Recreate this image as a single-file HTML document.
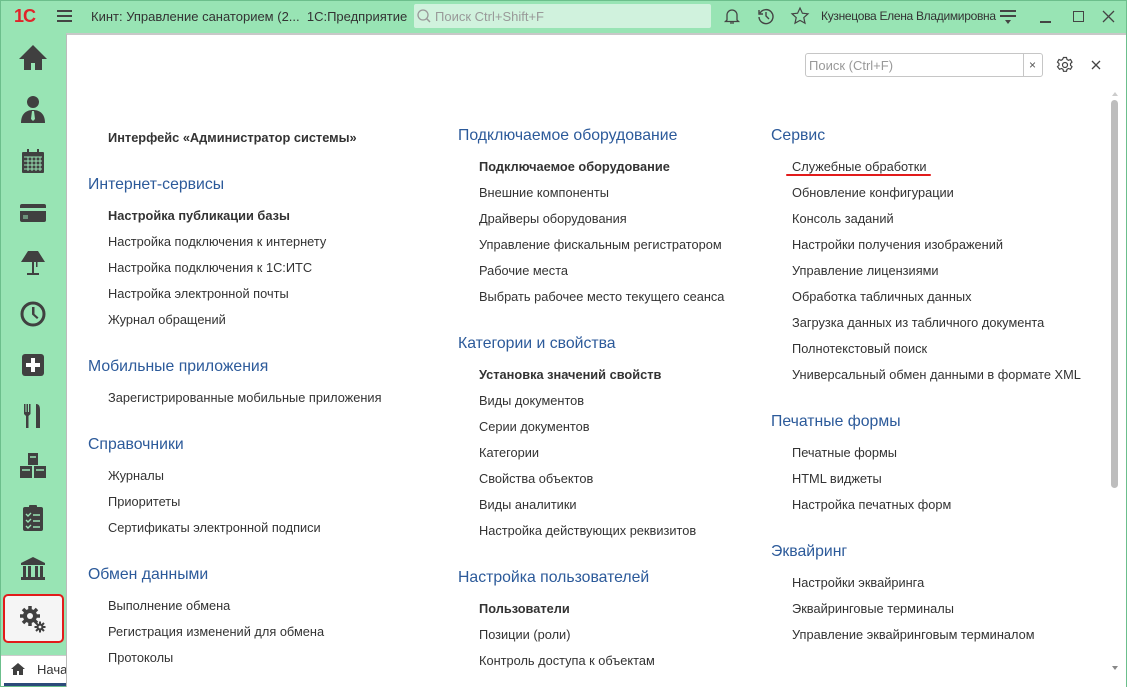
<!DOCTYPE html>
<html><head><meta charset="utf-8"><style>
*{margin:0;padding:0;box-sizing:border-box}
body{width:1127px;height:687px;overflow:hidden;background:#98e4b4;font-family:"Liberation Sans",sans-serif;position:relative;color:#333}
.a{position:absolute;white-space:nowrap}
.h{font-size:15.8px;color:#2c5a9a;line-height:20px;margin-top:1px}
.i{font-size:12.8px;line-height:16px;color:#333;margin-top:1px}
.b{font-weight:bold}
.ic{position:absolute;left:18px;width:30px;height:30px;fill:#404040}
</style></head><body>
<div class="a" style="left:0;top:0;width:1127px;height:687px;border:1px solid #6cbf8c"></div>
<div class="a" style="left:14px;top:6px;font:bold 18px 'Liberation Sans';color:#e0242a;letter-spacing:-1px">1С</div>
<div class="a" style="left:57px;top:10px;width:15px;height:2px;background:#444;box-shadow:0 5px 0 #444,0 10px 0 #444"></div>
<div class="a" style="left:91px;top:9px;font-size:13px;color:#333">Кинт: Управление санаторием (2...&nbsp;&nbsp;1С:Предприятие</div>
<div class="a" style="left:414px;top:4px;width:297px;height:24px;background:#d0f2dd;border-radius:2px"></div>
<svg class="a" style="left:416px;top:8px" width="16" height="16"><circle cx="7" cy="7" r="5" fill="none" stroke="#999" stroke-width="1.3"/><line x1="10.5" y1="10.5" x2="14" y2="14" stroke="#999" stroke-width="1.5"/></svg>
<div class="a" style="left:435px;top:9px;font-size:13px;color:#999">Поиск Ctrl+Shift+F</div>
<svg class="a" style="left:722px;top:6px" width="20" height="20" fill="none" stroke="#444" stroke-width="1.3"><path d="M5 14V9a5 5 0 0110 0v5l1.5 1.5h-13z M8 17h4"/></svg>
<svg class="a" style="left:756px;top:6px" width="20" height="20" fill="none" stroke="#444" stroke-width="1.4"><path d="M4 7a7 7 0 11-1 4M3 4v4h4M10 6v4l3 3"/></svg>
<svg class="a" style="left:790px;top:6px" width="20" height="20" fill="none" stroke="#444" stroke-width="1.2"><path d="M10 2l2.4 5.2 5.6.6-4.2 3.8 1.2 5.6L10 14.4 5 17.2l1.2-5.6L2 7.8l5.6-.6z"/></svg>
<div class="a" style="left:821px;top:9px;font-size:12px;color:#333;letter-spacing:-0.3px">Кузнецова Елена Владимировна</div>
<div class="a" style="left:1000px;top:10px;width:16px;height:1.5px;background:#444;box-shadow:0 5px 0 #444"></div>
<div class="a" style="left:1005px;top:20px;border:3px solid transparent;border-top:4px solid #444"></div>
<div class="a" style="left:1040px;top:21px;width:11px;height:1.5px;background:#444"></div>
<div class="a" style="left:1073px;top:11px;width:11px;height:11px;border:1.3px solid #444"></div>
<svg class="a" style="left:1102px;top:10px" width="13" height="13" stroke="#444" stroke-width="1.3"><path d="M1 1l11 11M12 1L1 12"/></svg>
<svg class="ic" style="top:43px" viewBox="0 0 30 30"><path d="M15 2L1 16h5v11h7v-7h4v7h7V16h5z"/></svg>
<svg class="ic" style="top:94px" viewBox="0 0 30 30"><circle cx="15" cy="8" r="6"/><path d="M3 29c0-9 5-13 12-13s12 4 12 13z"/><path d="M14 17h2l1 8-2 2-2-2z" fill="#98e4b4"/></svg>
<svg class="ic" style="top:146px" viewBox="0 0 30 30"><rect x="4" y="6" width="22" height="21" rx="1"/><rect x="9" y="3" width="2" height="5"/><rect x="19" y="3" width="2" height="5"/><path d="M6 11h18M6 15h18M6 19h18M6 23h18M10 11v14M14 11v14M18 11v14M22 11v14" stroke="#98e4b4" stroke-width="1"/></svg>
<svg class="ic" style="top:197px" viewBox="0 0 30 30"><rect x="2" y="7" width="26" height="18" rx="2"/><rect x="2" y="11" width="26" height="3" fill="#98e4b4"/><path d="M5 19h5M5 21h5" stroke="#98e4b4"/></svg>
<svg class="ic" style="top:248px" viewBox="0 0 30 30"><path d="M10 3h10l7 11H3z"/><rect x="14" y="14" width="2" height="12"/><rect x="9" y="25" width="12" height="2"/><rect x="18" y="14" width="1.5" height="5"/></svg>
<svg class="ic" style="top:299px" viewBox="0 0 30 30"><circle cx="15" cy="15" r="11" fill="none" stroke="#404040" stroke-width="3"/><path d="M14 8h2.5v7l4 3.5-1.5 1.5-5-4.5z"/></svg>
<svg class="ic" style="top:350px" viewBox="0 0 30 30"><rect x="4" y="4" width="22" height="22" rx="3"/><path d="M13 8h4v5h5v4h-5v5h-4v-5H8v-4h5z" fill="#fff"/></svg>
<svg class="ic" style="top:401px" viewBox="0 0 30 30"><path d="M6 3h1.5v8h1V3H10v8h1V3h1.5v10l-2 2v12H8V15l-2-2zM18 3c3 0 4 2 4 6v18h-4z"/></svg>
<svg class="ic" style="top:452px" viewBox="0 0 30 30"><rect x="10" y="1" width="10" height="12"/><rect x="2" y="14" width="12" height="12"/><rect x="16" y="14" width="12" height="12"/><path d="M12 5h6M4 18h8M18 18h8" stroke="#98e4b4" stroke-width="1.5"/></svg>
<svg class="ic" style="top:503px" viewBox="0 0 30 30"><rect x="5" y="4" width="20" height="24" rx="2"/><rect x="11" y="2" width="8" height="4" rx="1"/><path d="M8 11l2 2 3-3M8 17l2 2 3-3M8 23l2 2 3-3M15 12h7M15 18h7M15 24h7" stroke="#98e4b4" stroke-width="1.4" fill="none"/></svg>
<svg class="ic" style="top:554px" viewBox="0 0 30 30"><path d="M15 3l12 6v2H3V9z"/><rect x="5" y="12" width="3" height="11"/><rect x="10" y="12" width="3" height="11"/><rect x="17" y="12" width="3" height="11"/><rect x="22" y="12" width="3" height="11"/><rect x="3" y="23" width="24" height="3"/></svg>
<div class="a" style="left:3px;top:594px;width:61px;height:49px;background:#f5f5f5;border:2px solid #e21b1b;border-radius:5px"></div>
<svg class="a" style="left:18px;top:604px" width="30" height="30" viewBox="0 0 30 30"><g fill="#404040"><circle cx="12" cy="12" r="7"/><g stroke="#404040" stroke-width="3.5"><path d="M12 2v20M2 12h20M5 5l14 14M19 5L5 19"/></g><circle cx="12" cy="12" r="3" fill="#f5f5f5"/><circle cx="22" cy="23" r="3.5"/><g stroke="#404040" stroke-width="2"><path d="M22 17.5v11M16.5 23h11M18 19l8 8M26 19l-8 8"/></g><circle cx="22" cy="23" r="1.4" fill="#f5f5f5"/></g></svg>
<div class="a" style="left:1px;top:655px;width:65px;height:31px;background:#fff;border-top:1px solid #ccc"></div>
<svg class="a" style="left:11px;top:663px" width="14" height="12" viewBox="0 0 14 12"><path d="M7 0L0 6h2v6h4V8h2v4h4V6h2z" fill="#404040"/></svg>
<div class="a" style="left:37px;top:662px;font-size:13px;color:#333">Нача</div>
<div class="a" style="left:4px;top:683px;width:170px;height:3px;background:#2c4a7a"></div>
<div class="a" style="left:66px;top:33px;width:1060px;height:654px;background:#fff;border-top:2px solid #c8c8c8;border-left:1px solid #bbb"></div>
<div class="a" style="left:805px;top:53px;width:238px;height:24px;border:1px solid #c6c6c6;border-radius:3px"></div>
<div class="a" style="left:1023px;top:54px;width:1px;height:22px;background:#c6c6c6"></div>
<div class="a" style="left:809px;top:58px;font-size:13px;color:#999">Поиск (Ctrl+F)</div>
<div class="a" style="left:1029px;top:58px;font-size:12px;color:#555">×</div>
<svg class="a" style="left:1056px;top:56px" width="18" height="18" viewBox="0 0 18 18" fill="none" stroke="#444" stroke-width="1.2"><path d="M7.5 1.5h3l.5 2 1.5.8 2-.8 1.5 2.6-1.5 1.4v1.8l1.5 1.4-1.5 2.6-2-.8-1.5.8-.5 2h-3l-.5-2-1.5-.8-2 .8L1.5 10.7 3 9.3V7.5L1.5 6.1 3 3.5l2 .8 1.5-.8z"/><circle cx="9" cy="9" r="2.5"/></svg>
<svg class="a" style="left:1091px;top:60px" width="10" height="10" stroke="#444" stroke-width="1.3"><path d="M1 1l8 8M9 1L1 9"/></svg>
<div class="a" style="left:1112px;top:89px;border:3px solid transparent;border-bottom:4px solid #ccc"></div>
<div class="a" style="left:1111px;top:100px;width:7px;height:388px;background:#bdbdbd;border-radius:4px"></div>
<div class="a" style="left:1112px;top:666px;border:3px solid transparent;border-top:4px solid #888"></div>
<div class="a i b" style="left:108px;top:129px">Интерфейс «Администратор системы»</div>
<div class="a h" style="left:88px;top:174px">Интернет-сервисы</div>
<div class="a i b" style="left:108px;top:207px">Настройка публикации базы</div>
<div class="a i" style="left:108px;top:233px">Настройка подключения к интернету</div>
<div class="a i" style="left:108px;top:259px">Настройка подключения к 1С:ИТС</div>
<div class="a i" style="left:108px;top:285px">Настройка электронной почты</div>
<div class="a i" style="left:108px;top:311px">Журнал обращений</div>
<div class="a h" style="left:88px;top:356px">Мобильные приложения</div>
<div class="a i" style="left:108px;top:389px">Зарегистрированные мобильные приложения</div>
<div class="a h" style="left:88px;top:434px">Справочники</div>
<div class="a i" style="left:108px;top:467px">Журналы</div>
<div class="a i" style="left:108px;top:493px">Приоритеты</div>
<div class="a i" style="left:108px;top:519px">Сертификаты электронной подписи</div>
<div class="a h" style="left:88px;top:564px">Обмен данными</div>
<div class="a i" style="left:108px;top:597px">Выполнение обмена</div>
<div class="a i" style="left:108px;top:623px">Регистрация изменений для обмена</div>
<div class="a i" style="left:108px;top:649px">Протоколы</div>
<div class="a h" style="left:458px;top:125px">Подключаемое оборудование</div>
<div class="a i b" style="left:479px;top:158px">Подключаемое оборудование</div>
<div class="a i" style="left:479px;top:184px">Внешние компоненты</div>
<div class="a i" style="left:479px;top:210px">Драйверы оборудования</div>
<div class="a i" style="left:479px;top:236px">Управление фискальным регистратором</div>
<div class="a i" style="left:479px;top:262px">Рабочие места</div>
<div class="a i" style="left:479px;top:288px">Выбрать рабочее место текущего сеанса</div>
<div class="a h" style="left:458px;top:333px">Категории и свойства</div>
<div class="a i b" style="left:479px;top:366px">Установка значений свойств</div>
<div class="a i" style="left:479px;top:392px">Виды документов</div>
<div class="a i" style="left:479px;top:418px">Серии документов</div>
<div class="a i" style="left:479px;top:444px">Категории</div>
<div class="a i" style="left:479px;top:470px">Свойства объектов</div>
<div class="a i" style="left:479px;top:496px">Виды аналитики</div>
<div class="a i" style="left:479px;top:522px">Настройка действующих реквизитов</div>
<div class="a h" style="left:458px;top:567px">Настройка пользователей</div>
<div class="a i b" style="left:479px;top:600px">Пользователи</div>
<div class="a i" style="left:479px;top:626px">Позиции (роли)</div>
<div class="a i" style="left:479px;top:652px">Контроль доступа к объектам</div>
<div class="a h" style="left:771px;top:125px">Сервис</div>
<div class="a i" style="left:792px;top:158px">Служебные обработки</div>
<div class="a" style="left:786px;top:174px;width:145px;height:2px;background:#e21b1b;border-radius:1px"></div>
<div class="a i" style="left:792px;top:184px">Обновление конфигурации</div>
<div class="a i" style="left:792px;top:210px">Консоль заданий</div>
<div class="a i" style="left:792px;top:236px">Настройки получения изображений</div>
<div class="a i" style="left:792px;top:262px">Управление лицензиями</div>
<div class="a i" style="left:792px;top:288px">Обработка табличных данных</div>
<div class="a i" style="left:792px;top:314px">Загрузка данных из табличного документа</div>
<div class="a i" style="left:792px;top:340px">Полнотекстовый поиск</div>
<div class="a i" style="left:792px;top:366px">Универсальный обмен данными в формате XML</div>
<div class="a h" style="left:771px;top:411px">Печатные формы</div>
<div class="a i" style="left:792px;top:444px">Печатные формы</div>
<div class="a i" style="left:792px;top:470px">HTML виджеты</div>
<div class="a i" style="left:792px;top:496px">Настройка печатных форм</div>
<div class="a h" style="left:771px;top:541px">Эквайринг</div>
<div class="a i" style="left:792px;top:574px">Настройки эквайринга</div>
<div class="a i" style="left:792px;top:600px">Эквайринговые терминалы</div>
<div class="a i" style="left:792px;top:626px">Управление эквайринговым терминалом</div>
</body></html>
